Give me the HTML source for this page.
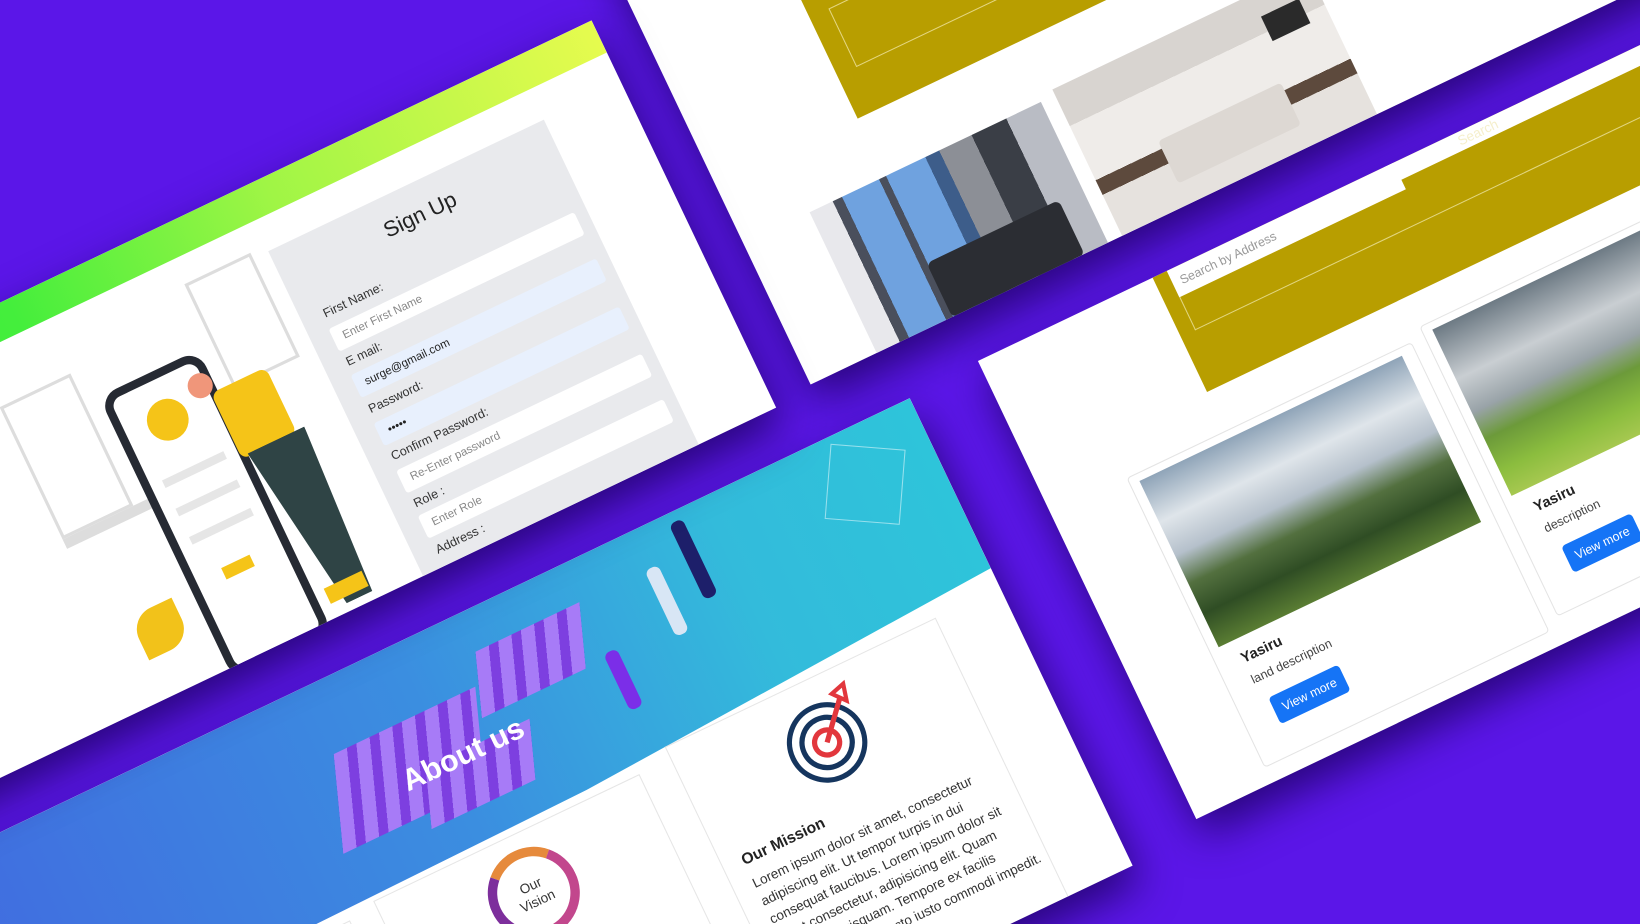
<!DOCTYPE html>
<html><head><meta charset="utf-8"><style>
html,body{margin:0;padding:0;width:1640px;height:924px;overflow:hidden;background:#5b16e8;font-family:"Liberation Sans",sans-serif}
#clip{position:relative;width:1640px;height:924px;overflow:hidden;background:#5b16e8}
#s{position:absolute;left:0;top:0;width:1568px;height:883px;transform:scale(1.0459,1.0464);transform-origin:0 0}
.p{position:absolute;transform-origin:0 0;transform:rotate(-25.5deg);background:#fff;overflow:hidden;box-shadow:0 18px 40px rgba(25,0,90,.75)}
.a{position:absolute}
.lbl{position:absolute;font-size:12px;color:#333}
.inp{position:absolute;height:24px;background:#fff;border-radius:3px;font-size:11px;color:#888;line-height:24px;padding-left:10px;box-sizing:border-box}
.txt{font-size:13px;color:#333;line-height:19px}
</style></head><body><div id="clip"><div id="s">

<!-- Panel 2: apartments -->
<div class="p" style="left:574px;top:-54px;width:1200px;height:467px;z-index:1">
  <div class="a" style="left:150px;top:0;width:1050px;height:257px;background:#b89e00"></div>
  <div class="a" style="left:170px;top:150px;width:500px;height:60px;border:1px solid #e4d680"></div>
  <div class="a" style="left:70px;top:318px;width:245px;height:150px;background:linear-gradient(90deg,#e8e8ec 0 10%,#4a4f5c 10% 14%,#6fa2df 14% 30%,#4a4f5c 30% 33%,#6fa2df 33% 50%,#3d5d8a 50% 56%,#8c8f96 56% 70%,#3a3e46 70% 85%,#b9bcc4 85%)"></div>
  <div class="a" style="left:150px;top:410px;width:140px;height:58px;background:#2b2d33;border-radius:6px"></div>
  <div class="a" style="left:330px;top:312px;width:270px;height:155px;background:linear-gradient(180deg,#d8d4d0 0 25%,#efece9 25% 62%,#5d4a3d 62% 72%,#e6e2de 72%)"></div>
  <div class="a" style="left:400px;top:400px;width:130px;height:45px;background:#ddd8d3;border-radius:4px"></div>
  <div class="a" style="left:540px;top:335px;width:40px;height:26px;background:#2a2a2a"></div>
</div>

<!-- Panel 3: land -->
<div class="p" style="left:935px;top:345px;width:1000px;height:485px;z-index:2">
  <div class="a" style="left:185px;top:0;width:815px;height:121px;background:#b89e00"></div>
  <div class="a" style="left:430px;top:0;width:570px;height:18px;background:#fff"></div>
  <div class="a" style="left:200px;top:0;width:240px;height:28px;background:#fff;font-size:12px;color:#999;line-height:28px;padding-left:8px;box-sizing:border-box">Search by Address</div>
  <div class="a" style="left:200px;top:28px;width:600px;height:34px;border:1px solid #e2d680;border-top:none"></div>
  <div class="a" style="left:505px;top:1px;color:#f5efcc;font-size:13px">Search</div>
  <div class="a" style="left:80px;top:162px;width:300px;height:305px;border:1px solid #e4e4e4;border-radius:4px"></div>
  <div class="a" style="left:90px;top:170px;width:278px;height:176px;background:linear-gradient(180deg,#8fa4b8 0,#dfe5ea 25%,#b5c0cb 45%,#53703f 62%,#2f4d24 80%,#5a7d33 100%)"></div>
  <div class="a" style="left:105px;top:357px;font-size:14px;font-weight:bold;color:#222">Yasiru</div>
  <div class="a" style="left:105px;top:381px;font-size:12px;color:#444">land description</div>
  <div class="a" style="left:112px;top:410px;width:74px;height:28px;background:#1574f6;border-radius:4px;color:#fff;font-size:12px;line-height:28px;text-align:center">View more</div>
  <div class="a" style="left:395px;top:152px;width:300px;height:305px;border:1px solid #e4e4e4;border-radius:4px"></div>
  <div class="a" style="left:405px;top:160px;width:282px;height:176px;background:linear-gradient(180deg,#6d7a84 0,#c9ced2 30%,#99a3a8 50%,#6c9a3a 66%,#8bbd3e 85%,#a6c850 100%)"></div>
  <div class="a" style="left:420px;top:347px;font-size:14px;font-weight:bold;color:#222">Yasiru</div>
  <div class="a" style="left:420px;top:371px;font-size:12px;color:#444">description</div>
  <div class="a" style="left:427px;top:400px;width:74px;height:28px;background:#1574f6;border-radius:4px;color:#fff;font-size:12px;line-height:28px;text-align:center">View more</div>
</div>

<!-- Panel 4: about -->
<div class="p" style="left:-123px;top:853.5px;width:1100px;height:495px;z-index:3">
  <div class="a" style="left:0;top:0;width:1100px;height:215px;background:linear-gradient(90deg,#4268e0 0%,#3b8ee0 50%,#33bbdb 80%,#2ec4da 100%);clip-path:polygon(0 0,100% 0,100% 180px,60% 205px,0 215px)"></div>
  <div class="a" style="left:440px;top:70px;width:150px;height:90px;background:repeating-linear-gradient(90deg,#a77bf7 0 14px,#7d3fe0 14px 24px);transform:skewX(-20deg)"></div>
  <div class="a" style="left:610px;top:40px;width:110px;height:60px;background:repeating-linear-gradient(90deg,#a77bf7 0 14px,#7d3fe0 14px 24px);transform:skewX(-20deg)"></div>
  <div class="a" style="left:520px;top:120px;width:110px;height:55px;background:repeating-linear-gradient(90deg,#a77bf7 0 14px,#7d3fe0 14px 24px);transform:skewX(-20deg)"></div>
  <div class="a" style="left:730px;top:95px;width:14px;height:60px;background:#7b2ee8;border-radius:6px"></div>
  <div class="a" style="left:800px;top:40px;width:14px;height:70px;background:#d8e6f5;border-radius:6px"></div>
  <div class="a" style="left:840px;top:10px;width:14px;height:80px;background:#1d1f6a;border-radius:6px"></div>
  <div class="a" style="left:990px;top:20px;width:70px;height:70px;border:1px solid rgba(255,255,255,.5);transform:rotate(30deg)"></div>
  <div class="a" style="left:505px;top:108px;color:#fff;font-size:29px;font-weight:bold">About us</div>
  <div class="a" style="left:130px;top:220px;width:270px;height:300px;border:1px solid #e6e6e6"></div>
  <div class="a" style="left:430px;top:213px;width:280px;height:300px;border:1px solid #e6e6e6"></div>
  <div class="a" style="left:528px;top:228px;width:88px;height:88px;border-radius:50%;border:9px solid #c2478d;border-top-color:#e68a3c;border-left-color:#7d2f9c;box-sizing:border-box;background:#fff;text-align:center;font-size:13px;line-height:16px;padding-top:20px;color:#333">Our<br>Vision</div>
  <div class="a" style="left:745px;top:200px;width:285px;height:320px;border:1px solid #e6e6e6"></div>
  <svg class="a" style="left:845px;top:215px" width="90" height="90" viewBox="0 0 90 90"><circle cx="42" cy="48" r="36" fill="none" stroke="#15355e" stroke-width="5"/><circle cx="42" cy="48" r="24" fill="none" stroke="#15355e" stroke-width="5"/><circle cx="42" cy="48" r="12" fill="none" stroke="#e2373d" stroke-width="5"/><path d="M42 48 L72 14" stroke="#e2373d" stroke-width="5"/><path d="M66 8 L80 4 L76 20 Z" fill="none" stroke="#e2373d" stroke-width="4"/></svg>
  <div class="a" style="left:765px;top:322px;font-size:15px;font-weight:bold;color:#222">Our Mission</div>
  <div class="a txt" style="left:765px;top:345px;width:262px">Lorem ipsum dolor sit amet, consectetur adipiscing elit. Ut tempor turpis in dui consequat faucibus. Lorem ipsum dolor sit amet consectetur, adipisicing elit. Quam quod illo quisquam. Tempore ex facilis numquam. Architecto iusto commodi impedit. Id</div>
</div>

<!-- Panel 1: sign up -->
<div class="p" style="left:-337px;top:450px;width:1000px;height:410px;z-index:4">
  <div class="a" style="left:0;top:0;width:1000px;height:34px;background:linear-gradient(90deg,#2ee83a 0%,#44ee3c 38%,#9ff545 65%,#e6fb4e 100%)"></div>
  <div class="a" style="left:330px;top:90px;width:75px;height:140px;border:3px solid #ddd;box-sizing:border-box"></div>
  <div class="a" style="left:540px;top:60px;width:70px;height:110px;border:3px solid #ddd;box-sizing:border-box"></div>
  <div class="a" style="left:330px;top:230px;width:110px;height:10px;background:#ddd"></div>
  <div class="a" style="left:420px;top:122px;width:105px;height:300px;border:8px solid #262a33;border-radius:18px;background:#fff;box-sizing:border-box"></div>
  <div class="a" style="left:450px;top:150px;width:40px;height:40px;border-radius:50%;background:#f5c418"></div>
  <div class="a" style="left:440px;top:220px;width:65px;height:8px;background:#e6e6e6"></div>
  <div class="a" style="left:440px;top:250px;width:65px;height:8px;background:#e6e6e6"></div>
  <div class="a" style="left:440px;top:280px;width:65px;height:8px;background:#e6e6e6"></div>
  <div class="a" style="left:455px;top:320px;width:30px;height:12px;background:#f5c418"></div>
  <div class="a" style="left:500px;top:142px;width:24px;height:24px;border-radius:50%;background:#f0967a"></div>
  <div class="a" style="left:518px;top:165px;width:58px;height:70px;background:#f5c418;border-radius:8px"></div>
  <div class="a" style="left:525px;top:232px;width:60px;height:170px;background:#2f4445;clip-path:polygon(0 0,100% 0,85% 100%,40% 100%)"></div>
  <div class="a" style="left:535px;top:380px;width:40px;height:16px;background:#f5c418"></div>
  <div class="a" style="left:355px;top:325px;width:45px;height:45px;background:#f2c21a;border-radius:50% 0"></div>
  <div class="a" style="left:626px;top:66px;width:292px;height:360px;background:#e9eaed">
    <div class="a" style="left:0;top:20px;width:292px;text-align:center;font-size:21px;color:#222">Sign Up</div>
    <div class="lbl" style="left:22px;top:70px">First Name:</div>
    <div class="inp" style="left:20px;top:92px;width:260px">Enter First Name</div>
    <div class="lbl" style="left:22px;top:121px">E mail:</div>
    <div class="inp" style="left:20px;top:141px;width:260px;background:#e8f0fd;color:#222">surge@gmail.com</div>
    <div class="lbl" style="left:22px;top:171px">Password:</div>
    <div class="inp" style="left:20px;top:192px;width:260px;background:#e8f0fd;color:#222">•••••</div>
    <div class="lbl" style="left:22px;top:221px">Confirm Password:</div>
    <div class="inp" style="left:20px;top:242px;width:260px">Re-Enter password</div>
    <div class="lbl" style="left:22px;top:271px">Role :</div>
    <div class="inp" style="left:20px;top:290px;width:260px">Enter Role</div>
    <div class="lbl" style="left:22px;top:320px">Address :</div>
  </div>
</div>

</div></div></body></html>
